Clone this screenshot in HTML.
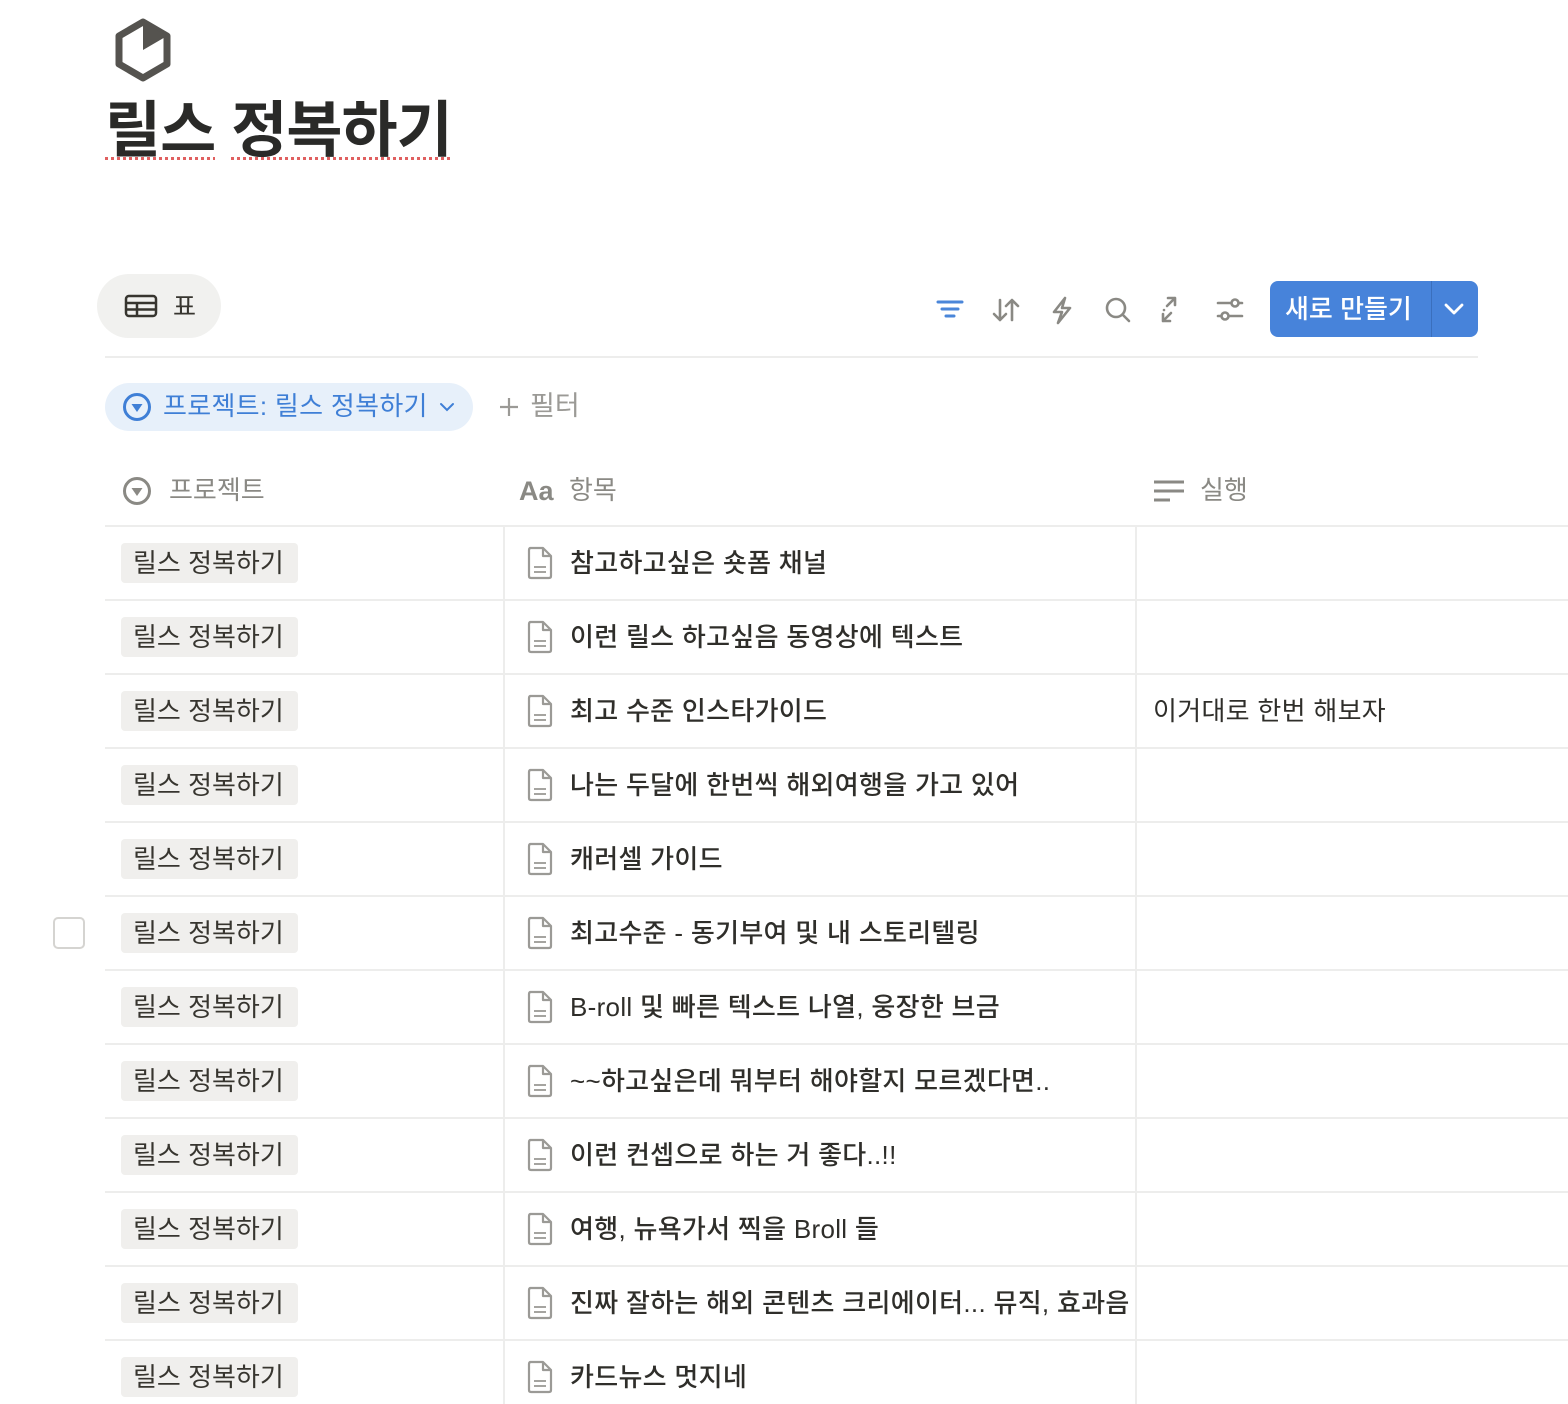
<!DOCTYPE html>
<html><head><meta charset="utf-8"><style>
*{margin:0;padding:0;box-sizing:border-box}
body{width:1568px;height:1404px;overflow:hidden;background:#fff;font-family:"Liberation Sans","Noto Sans CJK KR",sans-serif;color:#37352f;position:relative}
.a{position:absolute}
.title{left:105px;top:94px;font-size:61px;font-weight:700;color:#2a2a28;letter-spacing:-1px;line-height:72px;white-space:nowrap}
.sq{text-decoration:underline dotted #e06060;text-decoration-thickness:3px;text-underline-offset:6px}
.hl{height:2px;background:#ededec;left:105px;right:0}
.vl{width:2px;background:#ededec;top:526px;bottom:0}
.tag{left:121px;height:40px;width:177px;background:#f0efed;border-radius:4px;font-size:26px;line-height:40px;padding-left:12px;color:#37352f;white-space:nowrap}
.it{left:570px;font-size:26px;line-height:40px;white-space:nowrap;color:#2f2e2a;font-weight:500;letter-spacing:0.3px}
.doc{left:526px}
.hd{font-size:26px;color:#8a8984;line-height:40px}
</style></head><body>
<svg class="a" style="left:114px;top:18px" width="58" height="64" viewBox="0 0 58 64"><path d="M29 4 L53 18 L53 46 L29 60 L5 46 L5 18 Z" fill="none" stroke="#55534f" stroke-width="7" stroke-linejoin="round"/><path d="M29 4 L53 18 L29 32 Z" fill="#55534f"/></svg>
<div class="a title"><span class="sq">릴스</span> <span class="sq">정복하기</span></div>

<div class="a" style="left:97px;top:274px;width:124px;height:64px;background:#f1f1ef;border-radius:32px"></div>
<svg class="a" style="left:124px;top:294px" width="34" height="24" viewBox="0 0 34 24"><rect x="2" y="2" width="30" height="20" rx="3" fill="none" stroke="#37352f" stroke-width="2.5"/><line x1="2" y1="9" x2="32" y2="9" stroke="#37352f" stroke-width="2.5"/><line x1="2" y1="15.5" x2="32" y2="15.5" stroke="#37352f" stroke-width="2.5"/><line x1="13" y1="9" x2="13" y2="22" stroke="#37352f" stroke-width="2.5"/></svg>
<div class="a" style="left:173px;top:289px;font-size:25px;line-height:36px;color:#37352f">표</div>

<svg class="a" style="left:930px;top:290px" width="330" height="40" viewBox="0 0 330 40" fill="none" stroke-linecap="round" stroke-linejoin="round">
<g stroke="#4a86d9" stroke-width="3"><line x1="8" y1="12" x2="32" y2="12"/><line x1="12" y1="19" x2="28" y2="19"/><line x1="16" y1="26" x2="24" y2="26"/></g>
<g stroke="#8a8984" stroke-width="2.6">
<path d="M70 10 V30 M64 24 L70 30 L76 24"/><path d="M82 30 V10 M76 16 L82 10 L88 16"/>
<path d="M135 8 L124 22 L132 22 L128 33 L140 18 L132 18 Z"/>
<circle cx="186" cy="18" r="9"/><line x1="193" y1="25" x2="199" y2="31"/>
<path d="M245 8 L237 16 M238 8 H245 V15 M234 20 L234 20 M241 22 M233 31 L241 23 M233 24 V31 H240"/>
<line x1="288" y1="13" x2="312" y2="13"/><line x1="288" y1="26" x2="312" y2="26"/><circle cx="305" cy="13" r="3.5" fill="#fff"/><circle cx="295" cy="26" r="3.5" fill="#fff"/>
</g></svg>
<div class="a" style="left:1270px;top:281px;width:208px;height:56px;background:#4783da;border-radius:8px"></div>
<div class="a" style="left:1431px;top:281px;width:1px;height:56px;background:#3a6fbd"></div>
<div class="a" style="left:1285px;top:290px;font-size:26px;line-height:38px;color:#fff;font-weight:500">새로 만들기</div>
<svg class="a" style="left:1442px;top:299px" width="24" height="20" viewBox="0 0 24 20"><path d="M4 6 L12 14 L20 6" fill="none" stroke="#fff" stroke-width="2.8" stroke-linecap="round" stroke-linejoin="round"/></svg>

<div class="a hl" style="top:356px;right:90px"></div>

<div class="a" style="left:105px;top:383px;width:368px;height:48px;background:#e7f0fa;border-radius:24px"></div>
<svg class="a" style="left:121px;top:391px" width="32" height="32" viewBox="0 0 32 32"><circle cx="16" cy="16" r="12.5" fill="none" stroke="#3f7fd6" stroke-width="3"/><path d="M10.5 13 L21.5 13 L16 21 Z" fill="#3f7fd6"/></svg>
<div class="a" style="left:163px;top:387px;font-size:26px;line-height:38px;color:#3f7fd6;white-space:nowrap;letter-spacing:0.3px">프로젝트: 릴스 정복하기</div>
<svg class="a" style="left:438px;top:400px" width="18" height="14" viewBox="0 0 18 14"><path d="M3 4 L9 10 L15 4" fill="none" stroke="#3f7fd6" stroke-width="2" stroke-linecap="round"/></svg>
<svg class="a" style="left:498px;top:396px" width="22" height="22" viewBox="0 0 22 22"><path d="M11 2 V20 M2 11 H20" stroke="#9b9a96" stroke-width="2.2"/></svg>
<div class="a" style="left:530px;top:387px;font-size:27px;line-height:38px;color:#9b9a96">필터</div>

<svg class="a" style="left:121px;top:475px" width="32" height="32" viewBox="0 0 32 32"><circle cx="16" cy="16" r="12.5" fill="none" stroke="#8a8984" stroke-width="3"/><path d="M10.5 13 L21.5 13 L16 21 Z" fill="#8a8984"/></svg>
<div class="a hd" style="left:169px;top:470px">프로젝트</div>
<div class="a hd" style="left:519px;top:471px;font-weight:700;font-size:27px">Aa</div>
<div class="a hd" style="left:569px;top:470px">항목</div>
<svg class="a" style="left:1153px;top:478px" width="32" height="26" viewBox="0 0 32 26"><g stroke="#8a8984" stroke-width="3"><line x1="1" y1="4" x2="31" y2="4"/><line x1="1" y1="13" x2="31" y2="13"/><line x1="1" y1="22" x2="17" y2="22"/></g></svg>
<div class="a hd" style="left:1200px;top:470px">실행</div>

<div class="a hl" style="top:525px"></div>
<div class="a vl" style="left:503px"></div>
<div class="a vl" style="left:1135px"></div>

<div class="a" style="left:53px;top:917px;width:32px;height:32px;border:2px solid #d5d4d1;border-radius:5px"></div>

<div id="rows"></div>
<script>
var items=["참고하고싶은 숏폼 채널","이런 릴스 하고싶음 동영상에 텍스트","최고 수준 인스타가이드","나는 두달에 한번씩 해외여행을 가고 있어","캐러셀 가이드","최고수준 - 동기부여 및 내 스토리텔링","B-roll 및 빠른 텍스트 나열, 웅장한 브금","~~하고싶은데 뭐부터 해야할지 모르겠다면..","이런 컨셉으로 하는 거 좋다..!!","여행, 뉴욕가서 찍을 Broll 들","진짜 잘하는 해외 콘텐츠 크리에이터... 뮤직, 효과음","카드뉴스 멋지네"];
var h="";
for(var i=0;i<items.length;i++){var t=526+i*74;var c=t+37;
h+='<div class="a tag" style="top:'+(c-20)+'px">릴스 정복하기</div>';
h+='<svg class="a doc" style="top:'+(c-17)+'px" width="28" height="34" viewBox="0 0 28 34"><path d="M4 2 H17 L25 10 V30 Q25 32 23 32 H5 Q3 32 3 30 V4 Q3 2 5 2 Z M17 2 V10 H25" fill="none" stroke="#9b9a96" stroke-width="2.2" stroke-linejoin="round"/><line x1="8" y1="21" x2="20" y2="21" stroke="#9b9a96" stroke-width="1.8"/><line x1="8" y1="26" x2="20" y2="26" stroke="#9b9a96" stroke-width="1.8"/></svg>';
h+='<div class="a it" style="top:'+(c-20)+'px">'+items[i]+'</div>';
if(i==2)h+='<div class="a it" style="left:1153px;top:'+(c-20)+'px;font-weight:400">이거대로 한번 해보자</div>';
if(i<items.length-1)h+='<div class="a hl" style="top:'+(t+73)+'px"></div>';}
document.getElementById("rows").innerHTML=h;
</script>
</body></html>
